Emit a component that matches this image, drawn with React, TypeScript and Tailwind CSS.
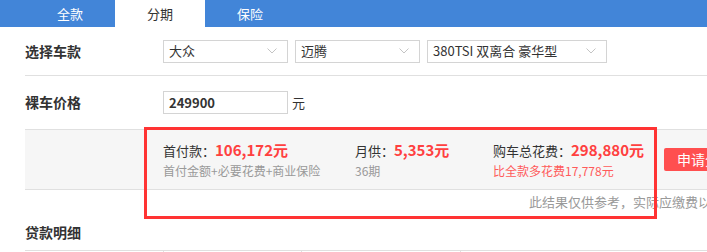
import React from 'react';

function Select({ value, w }: { value: string; w: string }) {
  return (
    <div className={`${w} h-[23px] border border-[#d4d4d4] bg-white flex items-center justify-between pl-[5px] pr-[10px] text-[13px] text-[#333]`}>
      <span>{value}</span>
      <svg className="w-[10px] h-[6px]" viewBox="0 0 10 6" fill="none" stroke="#c4c4c4" strokeWidth="1">
        <path d="M0.5 0.5L5 5L9.5 0.5" />
      </svg>
    </div>
  );
}

export default function App() {
  return (
    <div className="w-[707px] h-[252px] overflow-hidden bg-white relative font-['Noto_Sans_CJK_SC','Microsoft_YaHei',sans-serif] text-[#333]">
      {/* 顶部标签 */}
      <div className="h-[27px] bg-[#4285d8] flex pl-[25px] text-[13px]">
        <div className="w-[90px] flex items-center justify-center text-white">全款</div>
        <div className="w-[90px] flex items-center justify-center bg-white text-[#333]">分期</div>
        <div className="w-[90px] flex items-center justify-center text-white">保险</div>
      </div>

      <div className="pl-[25px]">
        {/* 选择车款 */}
        <div className="h-[49px] flex items-center border-b border-[#e0e0e0]">
          <div className="w-[138px] text-[14px] font-bold">选择车款</div>
          <div className="flex gap-[7px]">
            <Select value="大众" w="w-[125px]" />
            <Select value="迈腾" w="w-[125px]" />
            <Select value="380TSI 双离合 豪华型" w="w-[180px]" />
          </div>
        </div>

        {/* 裸车价格 */}
        <div className="h-[54px] flex items-center border-b border-[#e0e0e0]">
          <div className="w-[138px] text-[14px] font-bold">裸车价格</div>
          <div className="w-[125px] h-[23px] border border-[#d4d4d4] flex items-center pl-[5px] text-[13px] font-bold">249900</div>
          <span className="ml-[4px] text-[13px]">元</span>
        </div>

        {/* 结果 */}
        <div className="h-[60px] bg-[#f6f6f6] border-b border-[#e0e0e0] flex items-center pl-[138px] whitespace-nowrap">
          <div className="w-[192px] shrink-0">
            <div className="text-[13px] leading-[22px]">
              首付款：<span className="text-[15px] font-bold text-[#ff4040]">106,172元</span>
            </div>
            <div className="text-[12px] text-[#999] leading-[18px]">首付金额+必要花费+商业保险</div>
          </div>
          <div className="w-[138px] shrink-0">
            <div className="text-[13px] leading-[22px]">
              月供：<span className="text-[15px] font-bold text-[#ff4040]">5,353元</span>
            </div>
            <div className="text-[12px] text-[#999] leading-[18px]">36期</div>
          </div>
          <div className="w-[171px] shrink-0">
            <div className="text-[13px] leading-[22px]">
              购车总花费：<span className="text-[15px] font-bold text-[#ff4040]">298,880元</span>
            </div>
            <div className="text-[12px] text-[#ff5a5a] leading-[18px]">比全款多花费17,778元</div>
          </div>
          <div className="shrink-0 h-[23px] px-[13px] bg-[#ff4f4f] rounded-[2px] text-white text-[14px] flex items-center">申请分期</div>
        </div>

        <div className="h-[24px] flex items-center pl-[504px] text-[13px] text-[#999] whitespace-nowrap overflow-hidden">
          此结果仅供参考，实际应缴费以当地为准
        </div>

        {/* 贷款明细 */}
        <div className="h-[36px] flex items-center text-[14px] font-bold">贷款明细</div>
        <div className="flex border-t border-[#e0e0e0] h-[20px]">
          <div className="w-[138px]"></div>
          <div className="w-[138px] border-l border-[#e0e0e0]"></div>
          <div className="w-[159px] border-l border-[#e0e0e0]"></div>
          <div className="flex-1 border-l border-[#e0e0e0]"></div>
        </div>
      </div>

      {/* 红框标注 */}
      <div className="absolute left-[144px] top-[127px] w-[513px] h-[92px] border-[3px] border-[#f33]"></div>
    </div>
  );
}
